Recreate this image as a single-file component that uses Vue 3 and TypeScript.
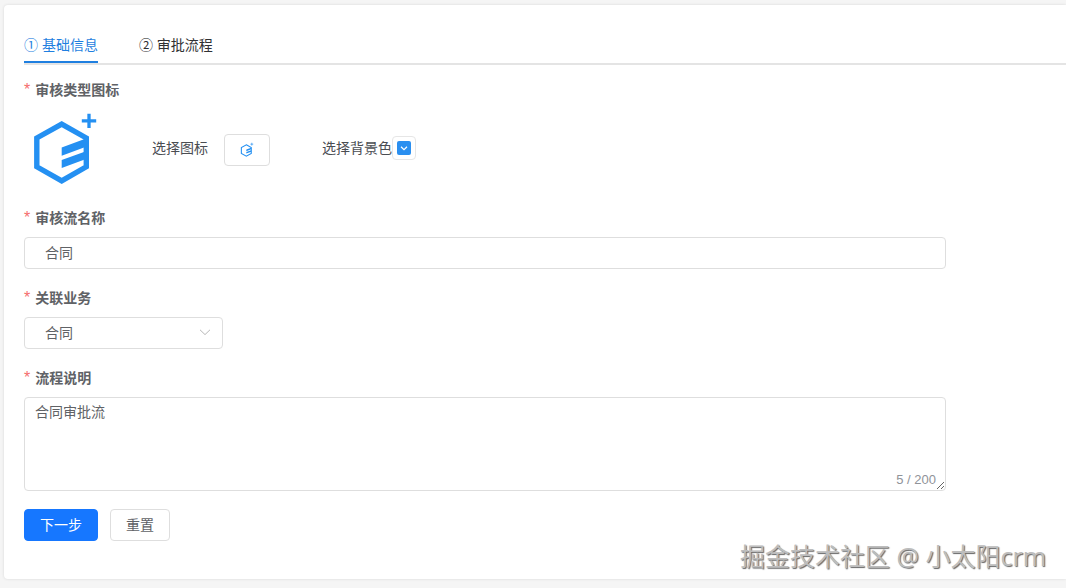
<script setup lang="ts">
import { ref } from 'vue'

const tabs = ['① 基础信息', '② 审批流程']
const active = ref(0)
const name = ref('合同')
const desc = ref('合同审批流')
</script>

<template>
  <div class="page">
    <div class="card">
      <div class="tabs">
        <div
          v-for="(t, i) in tabs"
          :key="t"
          class="tab"
          :class="{ active: active === i }"
          @click="active = i"
        >{{ t }}</div>
      </div>

      <div class="label icon-label"><i>*</i>审核类型图标</div>
      <div class="icon-row">
        <svg class="logo" viewBox="0 0 30 30" width="90" height="90">
          <use href="#hex-logo" />
        </svg>
        <span class="pick-text">选择图标</span>
        <button class="pick-btn" type="button">
          <svg viewBox="0 0 30 30" width="18" height="18"><use href="#hex-logo" /></svg>
        </button>
        <span class="bg-text">选择背景色</span>
        <span class="color-box">
          <span class="swatch">
            <svg viewBox="0 0 12 12" width="12" height="12">
              <path d="M3 4.8 6 7.6 9 4.8" fill="none" stroke="#fff" stroke-width="1.2" />
            </svg>
          </span>
        </span>
      </div>

      <div class="label"><i>*</i>审核流名称</div>
      <input v-model="name" class="field wide" type="text" />

      <div class="label"><i>*</i>关联业务</div>
      <div class="field select">
        <span>合同</span>
        <svg viewBox="0 0 12 12" width="12" height="12">
          <path d="M1 3.8 6 8.6 11 3.8" fill="none" stroke="#b8b8b8" stroke-width="1" />
        </svg>
      </div>

      <div class="label"><i>*</i>流程说明</div>
      <div class="area-wrap">
        <textarea v-model="desc" class="area"></textarea>
        <span class="count">5 / 200</span>
      </div>

      <div class="actions">
        <button class="btn primary" type="button">下一步</button>
        <button class="btn" type="button">重置</button>
      </div>
    </div>

    <div class="mark">掘金技术社区 @ 小太阳crm</div>

    <svg width="0" height="0" class="defs">
      <defs>
        <g id="hex-logo">
          <path
            d="M13.9 6.4 22.1 11V20.6L13.9 25.3 5.6 20.6V11Z"
            fill="none"
            stroke="#2490f2"
            stroke-width="1.8"
          />
          <path d="M13.9 14.2 22 11.2V13.9L13.9 16.9Z M13.9 18.3 22 15.4V18L13.9 21Z" fill="#2490f2" />
          <path d="M20.6 5.3H25.4M23 2.9V7.7" stroke="#2490f2" stroke-width="1.1" fill="none" />
        </g>
      </defs>
    </svg>
  </div>
</template>

<style scoped>
.page {
  position: relative;
  box-sizing: border-box;
  height: 588px;
  padding: 5px 0 9px 4px;
  overflow: hidden;
  background: #f5f5f5;
  font-family: "Liberation Sans", "Noto Sans CJK SC", sans-serif;
  font-size: 14px;
  color: #606266;
}

.card {
  box-sizing: border-box;
  height: 574px;
  padding: 22px 0 0 20px;
  background: #fff;
  border-radius: 4px 0 0 4px;
  box-shadow: 0 0 3px rgba(0, 0, 0, 0.12);
}

.tabs {
  display: flex;
  gap: 41px;
  height: 36px;
  border-bottom: 2px solid #e4e4e4;
}

.tab {
  height: 36px;
  padding-top: 10px;
  box-sizing: border-box;
  line-height: 16px;
  color: #303133;
  cursor: pointer;
}

.tab.active {
  color: #1f7fe0;
  border-bottom: 2px solid #1f7fe0;
}

.label {
  height: 20px;
  margin: 20px 0 8px;
  line-height: 18px;
  font-weight: 700;
  color: #606266;
}

.icon-label {
  margin: 16px 0 5px;
}

.label i {
  margin-right: 5px;
  font-size: 16px;
  font-style: normal;
  font-weight: 400;
  color: #f56c6c;
}

.icon-row {
  display: flex;
  align-items: center;
  height: 83px;
}

.logo {
  flex: none;
  margin: 5px 0 0 -4px;
}

.pick-text {
  margin: 0 0 2px 42px;
  color: #4a4d52;
}

.pick-btn {
  display: flex;
  align-items: center;
  justify-content: center;
  width: 46px;
  height: 32px;
  margin: 4px 0 0 16px;
  padding: 0;
  background: #fff;
  border: 1px solid #dedede;
  border-radius: 4px;
}

.bg-text {
  margin: 0 0 2px 52px;
  color: #4a4d52;
}

.color-box {
  display: flex;
  align-items: center;
  justify-content: center;
  width: 24px;
  height: 24px;
  box-sizing: border-box;
  border: 1px solid #e6e6e6;
  border-radius: 4px;
}

.swatch {
  display: flex;
  align-items: center;
  justify-content: center;
  width: 14px;
  height: 14px;
  background: #2a8ff0;
  border-radius: 2px;
}

.field {
  display: block;
  box-sizing: border-box;
  height: 32px;
  padding: 0 20px 2px;
  background: #fff;
  border: 1px solid #dedede;
  border-radius: 4px;
  font: inherit;
  color: #606266;
  outline: none;
}

.wide {
  width: 922px;
}

.select {
  display: flex;
  align-items: center;
  justify-content: space-between;
  width: 199px;
  padding-right: 11px;
}

.area-wrap {
  position: relative;
  width: 922px;
  height: 94px;
}

.area {
  display: block;
  box-sizing: border-box;
  width: 100%;
  height: 100%;
  padding: 4px 10px;
  border: 1px solid #dedede;
  border-radius: 4px;
  font: inherit;
  line-height: 21px;
  color: #606266;
  outline: none;
}

.count {
  position: absolute;
  right: 10px;
  bottom: 3px;
  font-size: 13px;
  line-height: 16px;
  color: #909399;
}

.actions {
  display: flex;
  gap: 12px;
  margin-top: 18px;
}

.btn {
  width: 60px;
  height: 32px;
  padding: 0 0 2px;
  background: #fff;
  border: 1px solid #dedede;
  border-radius: 4px;
  font: inherit;
  color: #606266;
}

.btn.primary {
  width: 74px;
  background: #1677ff;
  border-color: #1677ff;
  color: #fff;
}

.mark {
  position: absolute;
  left: 740px;
  top: 541px;
  font-family: "Noto Sans", "Noto Sans CJK SC", sans-serif;
  font-size: 25px;
  line-height: 30px;
  color: #bdbdbd;
  text-shadow: 1px 1px 1px #666;
  white-space: nowrap;
}

.defs {
  position: absolute;
}
</style>
